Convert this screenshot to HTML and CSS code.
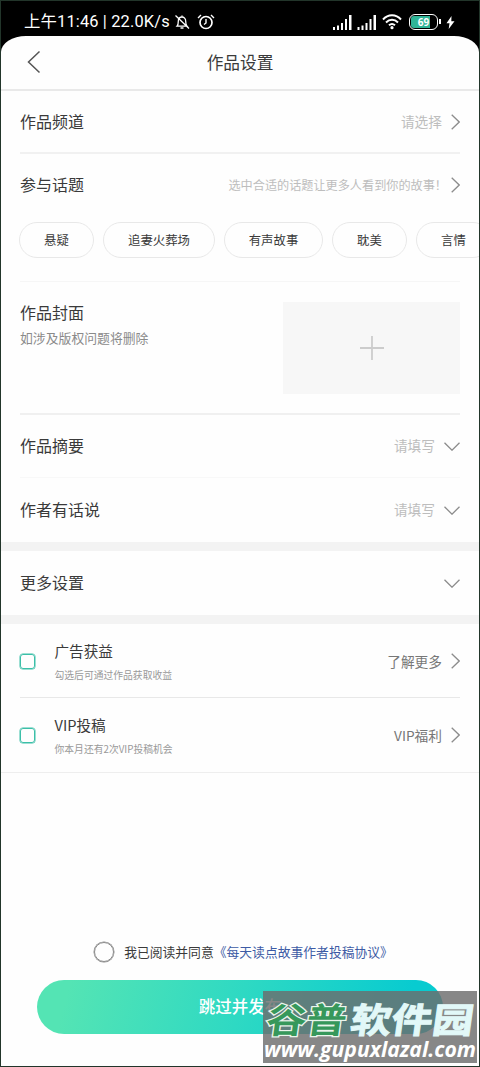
FILE: index.html
```html
<!DOCTYPE html>
<html lang="zh-CN">
<head>
<meta charset="utf-8">
<title>作品设置</title>
<link rel="stylesheet" href="styles.css">
</head>
<body>
<div class="screen">
  <div class="status">
    <span class="clock">上午11:46 | 22.0K/s</span>
    <svg class="bell" width="16" height="16" viewBox="0 0 16 16" fill="none" stroke="#fff" stroke-width="1.3"><path d="M3 12.2h10c-1.3-1.4-1.3-2.5-1.3-5C11.700 4.500 10 3 8 3S4.300 4.500 4.300 7.200c0 2.500 0 3.600-1.300 5zM6.500 14h3M8 3V1.500M1.500 1.500l13.500 13"/></svg>
    <svg class="alarm" width="18" height="16" viewBox="0 0 18 16" fill="none" stroke="#fff" stroke-width="1.7"><circle cx="9" cy="8.500" r="6"/><path d="M9 5v4l-2 1.500M1 4l3-3M17 4l-3-3" stroke-width="1.400"/></svg>
    <span class="grow"></span>
    <svg class="signals" width="44" height="17" viewBox="0 0 44 17" fill="#fff"><path d="M0 13h2v3H0zM4 11.500h2V16H4zM8 9h2v7H8zM12 5h2v11h-2zM16 1h2.500v15H16zM24.500 13h2v3h-2zM28.500 11.500h2V16h-2zM32.500 9h2v7h-2zM36.500 5h2v11h-2zM40.500 1H43v15h-2.500z"/></svg>
    <svg class="wifi" width="20" height="16" viewBox="0 0 20 16" fill="none" stroke="#fff" stroke-width="1.900"><path d="M1 5.500C6-.2 14-.2 19 5.500M4 8.500c3.500-3.600 8.500-3.600 12 0M7 11.300c1.800-1.700 4.200-1.700 6 0"/><circle cx="10" cy="13.700" r="1.600" fill="#fff" stroke="none"/></svg>
    <span class="battery"><span class="charge">69</span></span>
    <svg class="bolt" width="9" height="13" viewBox="0 0 9 13" fill="#fff"><path d="M5.500 0L.5 7.200h3L2.700 13 8.500 5.200h-3.200z"/></svg>
  </div>

  <div class="page">
    <header class="header">
      <svg class="back" width="14" height="24" viewBox="0 0 14 24"><path d="M12.500 1.500L1.500 12l11 10.500"/></svg>
      <h1 class="title">作品设置</h1>
      <span class="back"></span>
    </header>

    <div class="row channel"><span class="label">作品频道</span><span class="hint">请选择</span><svg class="arrow" width="9" height="16" viewBox="0 0 9 16"><path d="M.7.700L8.200 8 .7 15.300"/></svg></div>
    <div class="row topic"><span class="label">参与话题</span><span class="hint small">选中合适的话题让更多人看到你的故事！</span><svg class="arrow" width="9" height="16" viewBox="0 0 9 16"><path d="M.7.700L8.200 8 .7 15.300"/></svg></div>
    <div class="chips">
      <span class="chip two">悬疑</span><span class="chip five">追妻火葬场</span><span class="chip four">有声故事</span><span class="chip two">耽美</span><span class="chip two">言情</span>
    </div>

    <div class="cover">
      <div class="cover-text"><div class="label">作品封面</div><div class="note">如涉及版权问题将删除</div></div>
      <div class="upload"><svg width="24" height="24" viewBox="0 0 24 24"><path d="M12 0v24M0 12h24" stroke="#ccc" stroke-width="1.800"/></svg></div>
    </div>

    <div class="row summary"><span class="label">作品摘要</span><span class="hint">请填写</span><svg class="arrow" width="16" height="9" viewBox="0 0 16 9"><path d="M.5.700L8 8.200 15.500.700"/></svg></div>
    <div class="row words"><span class="label">作者有话说</span><span class="hint">请填写</span><svg class="arrow" width="16" height="9" viewBox="0 0 16 9"><path d="M.5.700L8 8.200 15.500.700"/></svg></div>
    <div class="band"></div>
    <div class="row more"><span class="label">更多设置</span><svg class="arrow" width="16" height="9" viewBox="0 0 16 9"><path d="M.5.700L8 8.200 15.500.700"/></svg></div>
    <div class="band"></div>

    <div class="option first">
      <span class="box"></span>
      <div class="option-text"><div class="name">广告获益</div><div class="desc">勾选后可通过作品获取收益</div></div>
      <span class="link">了解更多</span><svg class="arrow" width="9" height="16" viewBox="0 0 9 16"><path d="M.7.700L8.200 8 .7 15.300"/></svg>
    </div>
    <div class="option last">
      <span class="box"></span>
      <div class="option-text"><div class="name">VIP投稿</div><div class="desc">你本月还有2次VIP投稿机会</div></div>
      <span class="link">VIP福利</span><svg class="arrow" width="9" height="16" viewBox="0 0 9 16"><path d="M.7.700L8.200 8 .7 15.300"/></svg>
    </div>

    <footer class="footer">
      <div class="agree"><span class="radio"></span><span>我已阅读并同意</span><span class="terms">《每天读点故事作者投稿协议》</span></div>
      <div class="submit">跳过并发布</div>
    </footer>
  </div>

  <div class="watermark">
    <svg width="214" height="72" viewBox="0 0 214 72">
      <g class="brand" transform="translate(5 0) skewX(-8)">
        <text class="green" x="3" y="42" textLength="80" lengthAdjust="spacingAndGlyphs">谷普</text>
        <text class="pale" x="87" y="42" textLength="123" lengthAdjust="spacingAndGlyphs">软件园</text>
      </g>
      <text class="url" x="1" y="66" textLength="212" lengthAdjust="spacingAndGlyphs">www.gupuxlazal.com</text>
    </svg>
  </div>
</div>
</body>
</html>
```
FILE: styles.css
```css
* { box-sizing: border-box; }
body { margin: 0; background: #000; }
.screen {
  position: relative;
  display: flex;
  flex-direction: column;
  width: 480px;
  height: 1067px;
  border: 1px solid #22352a;
  background: #000;
  overflow: hidden;
  font-family: "Noto Sans CJK SC", sans-serif;
  color: #3a3a3a;
}
svg { display: block; flex: none; }

.status { display: flex; flex: none; align-items: center; height: 35px; padding: 7px 24px 0 23px; color: #fff; }
.clock { width: 149px; font-family: Roboto, "Noto Sans CJK SC", sans-serif; font-size: 16.400px; line-height: 20px; letter-spacing: .15px; white-space: nowrap; }
.bell { margin-left: 1px; }
.alarm { margin-left: 7px; }
.grow { flex: 1; }
.wifi { margin-left: 5px; }
.battery { position: relative; width: 29px; height: 16px; margin-left: 7px; padding: 1px; border: 1.5px solid #fff; border-radius: 6px; }
.battery::after { content: ""; position: absolute; right: -4px; top: 4px; width: 2px; height: 5px; background: #fff; }
.charge { display: block; height: 100%; border-radius: 3px; background: linear-gradient(90deg, #2fb597 78%, #000 78%); font: bold 10px/12px "Open Sans", sans-serif; text-align: center; }
.bolt { margin-left: 8px; }

.page { display: flex; flex: 1; flex-direction: column; min-height: 0; border-radius: 25px 25px 0 0 / 16px 16px 0 0; background: #fefefe; overflow: hidden; }
.header { display: flex; flex: none; align-items: center; justify-content: space-between; height: 55px; padding: 0 26px 1px; border-bottom: 2px solid #e9e9e9; }
.title { margin: 0; font-size: 16.700px; font-weight: 400; line-height: 24px; }
.back { width: 14px; fill: none; stroke: #555; stroke-width: 1.500; }
.row { display: flex; flex: none; align-items: center; margin: 0 19px; }
.label { flex: 1; font-size: 16px; line-height: 24px; white-space: nowrap; }
.row .label, .row .hint { padding-bottom: 2px; }
.hint { font-size: 13.700px; line-height: 20px; color: #bdbdbd; }
.hint.small { margin-right: -5px; padding-bottom: 0; font-size: 12.150px; }
.arrow { margin-left: 9px; fill: none; stroke: #8c8c8c; stroke-width: 1.300; }
.channel { height: 63px; border-bottom: 2px solid #f1f1f1; }
.topic { height: 62px; }
.summary { height: 63px; border-bottom: 1px solid #f8f8f8; }
.words { height: 64px; }
.more { height: 64px; }
.band { flex: none; height: 9px; background: #f3f3f3; }

.chips { display: flex; flex: none; gap: 9px; height: 65px; padding: 6px 0 0 18px; overflow: hidden; }
.chip { flex: none; height: 36px; border: 1px solid #e8e8e8; border-radius: 18px; font-size: 12.400px; line-height: 34px; text-align: center; }
.two { width: 75px; }
.five { width: 112px; }
.four { width: 99px; }

.cover { display: flex; flex: none; justify-content: space-between; height: 134px; margin: 0 19px; padding-top: 20px; border-top: 1px solid #f6f6f6; border-bottom: 2px solid #f0f0f0; }
.cover .label { margin-top: -2px; }
.note { margin-top: 4px; font-size: 12.850px; line-height: 20px; color: #8a8a8a; }
.upload { display: flex; align-items: center; justify-content: center; width: 177px; height: 92px; background: #f7f7f7; }

.option { display: flex; flex: none; align-items: center; }
.first { height: 74px; margin: 0 19px; padding-top: 1px; border-bottom: 1px solid #e8e8e8; }
.last { height: 75px; padding: 0 19px; border-bottom: 1px solid #eee; }
.box { flex: none; width: 15px; height: 15px; border: 1.500px solid #3bbfa8; border-radius: 3px; box-shadow: 0 0 0 .5px #3bbfa8; }
.option-text { flex: 1; margin-left: 19.500px; }
.name { font-size: 14.600px; line-height: 22px; }
.desc { margin-top: 5px; font-size: 9.800px; line-height: 16px; color: #999; }
.link { padding-bottom: 1px; font-size: 13.700px; line-height: 20px; color: #777; }

.footer { display: flex; flex-direction: column; align-items: center; margin-top: auto; padding-bottom: 32px; }
.agree { display: flex; align-items: center; height: 24px; margin-bottom: 16px; padding-left: 7px; font-size: 12.800px; line-height: 20px; white-space: nowrap; }
.radio { width: 20px; height: 20px; margin-right: 10px; border: 1.500px solid #888; border-radius: 50%; box-shadow: 0 0 0 .5px #888; }
.terms { color: #3d5ba5; }
.submit { width: 406px; height: 54px; border-radius: 27px; background: linear-gradient(105deg, #54e4b4 8%, #2ed9c3 50%, #08cbd0 90%); color: #fff; font-size: 16.500px; font-weight: 500; line-height: 53px; text-align: center; }

.watermark { position: absolute; left: 262px; top: 990px; width: 214px; height: 72px; background: rgba(108, 108, 108, .82); }
.brand { font-size: 35px; font-weight: 700; paint-order: stroke; }
.green { fill: #36985b; stroke: #eaf5ec; stroke-width: 2.500px; }
.pale { fill: #e2f8f8; stroke: #e2f8f8; stroke-width: 1px; }
.url { fill: #fff; font: italic bold 21.500px "Open Sans", sans-serif; }
```
